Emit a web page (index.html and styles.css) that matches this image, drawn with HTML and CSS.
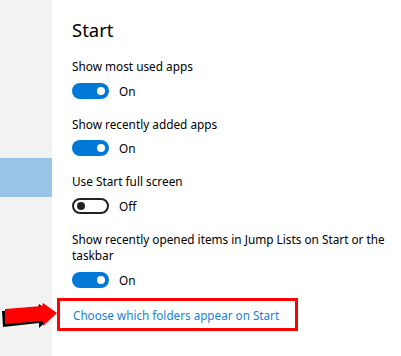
FILE: index.html
```html
<!DOCTYPE html>
<html lang="en">
<head>
    <meta charset="UTF-8">
    <meta name="viewport" content="width=device-width, initial-scale=1.0">
    <title>Start settings</title>
    <link rel="stylesheet" href="styles.css">
</head>
<body>
    <aside class="sidebar">
        <div class="nav-selected"></div>
    </aside>

    <main class="content">
        <h1 class="title">Start</h1>

        <div class="setting">
            <p class="label">Show most used apps</p>
            <div class="switch-row">
                <span class="toggle on"><span class="knob"></span></span>
                <span class="state">On</span>
            </div>
        </div>

        <div class="setting">
            <p class="label">Show recently added apps</p>
            <div class="switch-row">
                <span class="toggle on"><span class="knob"></span></span>
                <span class="state">On</span>
            </div>
        </div>

        <div class="setting">
            <p class="label">Use Start full screen</p>
            <div class="switch-row">
                <span class="toggle off"><span class="knob"></span></span>
                <span class="state">Off</span>
            </div>
        </div>

        <div class="setting last">
            <p class="label">Show recently opened items in Jump Lists on Start or the<br>taskbar</p>
            <div class="switch-row">
                <span class="toggle on"><span class="knob"></span></span>
                <span class="state">On</span>
            </div>
        </div>

        <div class="link-box">
            <a href="#" class="link">Choose which folders appear on Start</a>
            <svg class="arrow" width="56" height="26" viewBox="0 0 56 26">
                <polygon points="0,8 36,6 37,1 51,12 37,25 37,20 1,24" fill="#000"/>
                <polygon points="3,6 40,3 41,0 55,10 41,23 41,18 3,21" fill="#ff0000"/>
            </svg>
        </div>
    </main>
</body>
</html>
```

FILE: styles.css
```css
body {
    margin: 0;
    display: flex;
    height: 356px;
    font-family: "Noto Sans", "Open Sans", sans-serif;
    color: #000;
    background-color: #fff;
}

.sidebar {
    width: 52px;
    flex-shrink: 0;
    background-color: #f2f2f2;
}

.nav-selected {
    margin-top: 158px;
    height: 39px;
    background-color: #99c4e8;
}

.content {
    flex: 1;
    padding: 17px 0 0 20px;
}

.title {
    margin: 0 0 15px 0;
    font-size: 18.5px;
    font-weight: normal;
    line-height: 26px;
}

.setting {
    margin-bottom: 15px;
}

.setting.last {
    margin-bottom: 8px;
}

.label {
    margin: 0;
    font-size: 11.8px;
    line-height: 16.5px;
    white-space: nowrap;
}

.switch-row {
    display: flex;
    align-items: center;
    gap: 10px;
    margin-top: 6px;
    height: 20px;
}

.toggle {
    box-sizing: border-box;
    width: 37px;
    height: 16px;
    border-radius: 8px;
    display: flex;
    align-items: center;
    padding: 0 4px;
}

.toggle .knob {
    width: 8px;
    height: 8px;
    border-radius: 50%;
}

.toggle.on {
    background-color: #0078d7;
    justify-content: flex-end;
}

.toggle.on .knob {
    background-color: #fff;
}

.toggle.off {
    border: 2px solid #222;
    padding: 0 3px;
}

.toggle.off .knob {
    background-color: #222;
}

.state {
    font-size: 11.8px;
}

.link-box {
    position: relative;
    display: inline-block;
    margin-left: -15px;
    border: 3px solid #ff0000;
    padding: 5px 16px 5px 13px;
    line-height: 16px;
}

.link {
    color: #1a80d9;
    text-decoration: none;
    font-size: 11.7px;
}

.arrow {
    position: absolute;
    left: -58px;
    top: 2px;
}
```
